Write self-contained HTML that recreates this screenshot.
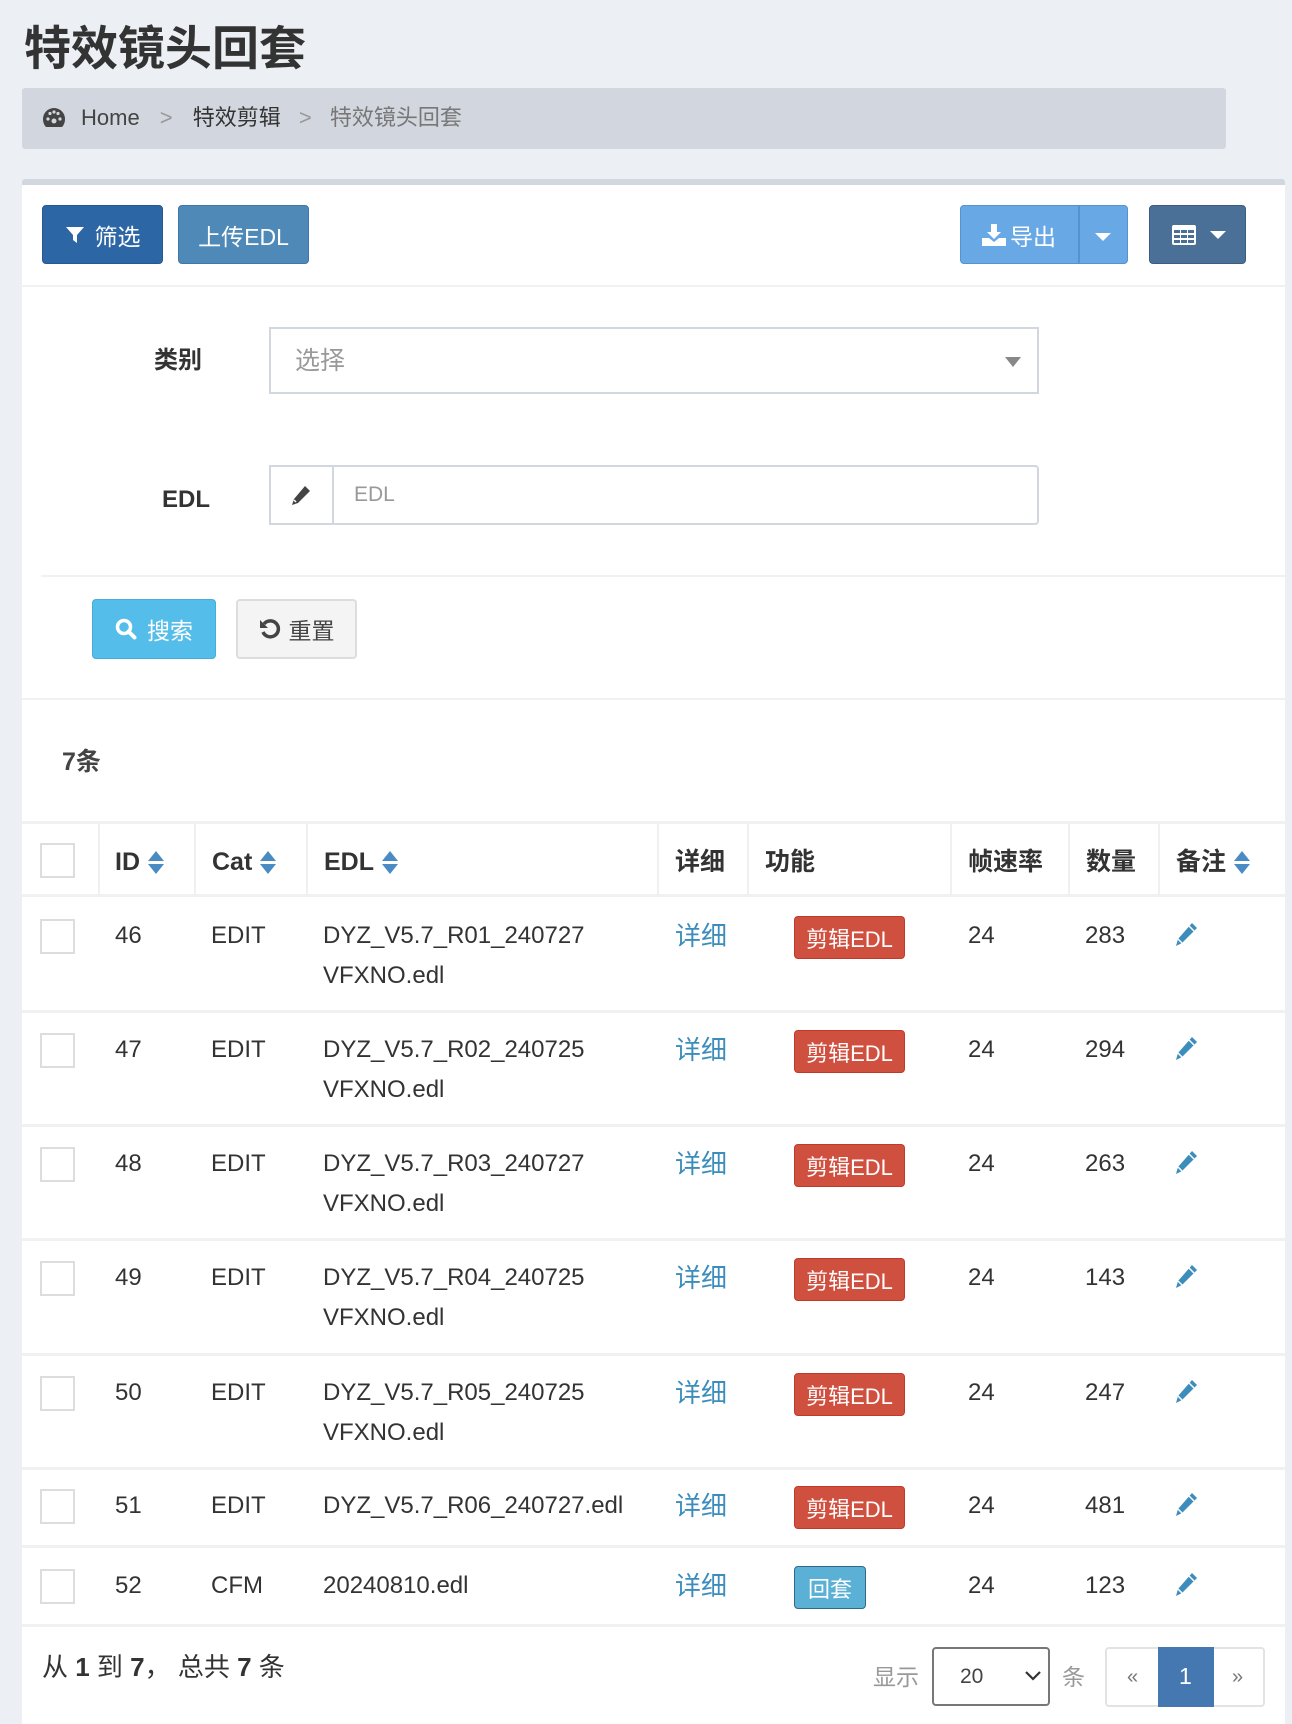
<!DOCTYPE html>
<html><head><meta charset="utf-8">
<style>
*{box-sizing:border-box;margin:0;padding:0}
body{width:1292px;height:1724px;background:#ecf0f5;font-family:"Liberation Sans","Noto Sans CJK SC",sans-serif;color:#333;position:relative;overflow:hidden}
.a{position:absolute}
.btn{position:absolute;border-radius:4px;color:#fff;font-size:23px;display:flex;align-items:center;justify-content:center}
.t{position:absolute;font-size:24px;color:#333;line-height:40px;white-space:nowrap}
.hd{position:absolute;font-size:25px;font-weight:bold;color:#333;top:842px;line-height:40px;white-space:nowrap}
.vl{position:absolute;top:821px;height:75px;width:2px;background:#f0f0f0}
.cb{position:absolute;left:40px;width:35px;height:35px;border:2px solid #ddd;background:#fff}
.hl{position:absolute;left:22px;width:1263px;height:3px;background:#f1f1f1}
.badge{position:absolute;left:794px;width:111px;height:43px;background:#d05040;border:1px solid #c1392b;border-radius:4px;color:#fff;font-size:22px;display:flex;align-items:center;justify-content:center}
.lnk{color:#3c8dbc;font-size:26px}
.sort{display:inline-block;vertical-align:middle;margin-left:8px;width:14px;height:24px;position:relative}
.sort:before{content:"";position:absolute;left:0;top:0;border-left:8px solid transparent;border-right:8px solid transparent;border-bottom:10px solid #4a8bc3}
.sort:after{content:"";position:absolute;left:0;top:13px;border-left:8px solid transparent;border-right:8px solid transparent;border-top:10px solid #4a8bc3}
</style></head><body>
<div class="a" style="left:24px;top:21px;font-size:47px;font-weight:bold;color:#333;line-height:56px">特效镜头回套</div>
<div class="a" style="left:22px;top:88px;width:1204px;height:61px;background:#d2d6de;border-radius:3px"></div>
<svg class="a" style="left:42px;top:107px" width="24" height="22" viewBox="0 0 24 22"><path d="M12 1A11 11 0 0 0 1 12c0 3 1 6 3 8h16c2-2 3-5 3-8A11 11 0 0 0 12 1z" fill="#444"/><circle cx="12" cy="14" r="2.5" fill="#d2d6de"/><circle cx="6" cy="12" r="1.6" fill="#d2d6de"/><circle cx="18" cy="12" r="1.6" fill="#d2d6de"/><circle cx="8" cy="6.5" r="1.6" fill="#d2d6de"/><circle cx="16" cy="6.5" r="1.6" fill="#d2d6de"/><circle cx="12" cy="5" r="1.6" fill="#d2d6de"/></svg>
<div class="a" style="left:81px;top:103px;font-size:22px;line-height:30px;color:#444;white-space:nowrap">Home <span style="color:#999;margin:0 14px">&gt;</span> <span style="color:#333">特效剪辑</span> <span style="color:#999;margin:0 12px">&gt;</span> <span style="color:#777">特效镜头回套</span></div>

<div class="a" style="left:22px;top:179px;width:1263px;height:1545px;background:#fff;border-top:6px solid #d2d6de;border-radius:3px 3px 0 0"></div>

<div class="btn" style="left:42px;top:205px;width:121px;height:59px;background:#2c66a4;border:1px solid #25598f"><svg width="20" height="20" viewBox="0 0 20 20" style="margin-right:10px"><path d="M1 2h18l-7 8v8l-4-3v-5z" fill="#fff"/></svg>筛选</div>
<div class="btn" style="left:178px;top:205px;width:131px;height:59px;background:#4f89b8;border:1px solid #3f78a8">上传EDL</div>
<div class="btn" style="left:960px;top:205px;width:168px;height:59px;background:#68a9e5;border:1px solid #5592cf;justify-content:flex-start;padding-left:21px"><svg width="24" height="22" viewBox="0 0 24 22" style="margin-right:4px"><path d="M9 0h6v8h4l-7 7-7-7h4z" fill="#fff"/><path d="M0 14h7l5 4 5-4h7v8H0z" fill="#fff"/></svg>导出</div>
<div class="a" style="left:1078px;top:206px;width:2px;height:57px;background:#5592cf"></div>
<div class="a" style="left:1095px;top:233px;border-left:8px solid transparent;border-right:8px solid transparent;border-top:8px solid #fff"></div>
<div class="btn" style="left:1149px;top:205px;width:97px;height:59px;background:#4a7097;border:1px solid #3c5d80;justify-content:flex-start;padding-left:22px"><svg width="24" height="20" viewBox="0 0 24 20"><rect x="0" y="0" width="24" height="20" rx="2" fill="#fff"/><g fill="#4a7097"><rect x="2" y="5" width="6" height="3"/><rect x="9" y="5" width="6" height="3"/><rect x="16" y="5" width="6" height="3"/><rect x="2" y="10" width="6" height="3"/><rect x="9" y="10" width="6" height="3"/><rect x="16" y="10" width="6" height="3"/><rect x="2" y="15" width="6" height="3"/><rect x="9" y="15" width="6" height="3"/><rect x="16" y="15" width="6" height="3"/></g></svg><span style="margin-left:14px;border-left:8px solid transparent;border-right:8px solid transparent;border-top:8px solid #fff"></span></div>
<div class="hl" style="top:285px;height:2px"></div>

<div class="a" style="left:154px;top:343px;font-size:24px;font-weight:bold;line-height:36px">类别</div>
<div class="a" style="left:269px;top:327px;width:770px;height:67px;border:2px solid #d2d6de"></div>
<div class="a" style="left:295px;top:343px;font-size:25px;color:#999;line-height:36px">选择</div>
<div class="a" style="left:1005px;top:357px;border-left:8px solid transparent;border-right:8px solid transparent;border-top:10px solid #888"></div>

<div class="a" style="left:162px;top:482px;font-size:24px;font-weight:bold;line-height:36px">EDL</div>
<div class="a" style="left:269px;top:465px;width:770px;height:60px;border:2px solid #d2d6de;border-radius:0 4px 4px 0"></div>
<div class="a" style="left:332px;top:467px;width:2px;height:56px;background:#d2d6de"></div>
<svg class="a" style="left:290px;top:484px" width="22" height="22" viewBox="0 0 22 22"><path d="M15 2l5 5-12 12-6 2 2-6z" fill="#444"/><path d="M4 16l2 2" stroke="#fff" stroke-width="1.5"/></svg>
<div class="a" style="left:354px;top:479px;font-size:21px;color:#999;line-height:32px">EDL</div>
<div class="a" style="left:41px;top:575px;width:1244px;height:2px;background:#f1f1f1"></div>

<div class="btn" style="left:92px;top:599px;width:124px;height:60px;background:#54bde9;border:1px solid #46acd8"><svg width="22" height="22" viewBox="0 0 22 22" style="margin-right:10px"><circle cx="9" cy="9" r="6.5" stroke="#fff" stroke-width="3.5" fill="none"/><path d="M13.5 13.5l6 6" stroke="#fff" stroke-width="4" stroke-linecap="round"/></svg>搜索</div>
<div class="btn" style="left:236px;top:599px;width:121px;height:60px;background:#f4f4f4;border:2px solid #ddd;color:#444"><svg width="22" height="22" viewBox="0 0 22 22" style="margin-right:8px"><path d="M5 6A8 8 0 1 1 4 14" stroke="#444" stroke-width="3.5" fill="none"/><path d="M1 2v8h8z" fill="#444"/></svg>重置</div>
<div class="hl" style="top:698px;height:2px"></div>

<div class="a" style="left:62px;top:744px;font-size:25px;font-weight:bold;line-height:36px;color:#444">7条</div>

<div class="hl" style="top:821px;height:3px"></div>
<div class="hl" style="top:894px;height:3px"></div>
<div class="vl" style="left:98px"></div><div class="vl" style="left:194px"></div><div class="vl" style="left:306px"></div><div class="vl" style="left:657px"></div><div class="vl" style="left:747px"></div><div class="vl" style="left:950px"></div><div class="vl" style="left:1068px"></div><div class="vl" style="left:1158px"></div>
<div class="cb" style="top:843px"></div>
<div class="hd" style="left:115px">ID<span class="sort"></span></div>
<div class="hd" style="left:212px">Cat<span class="sort"></span></div>
<div class="hd" style="left:324px">EDL<span class="sort"></span></div>
<div class="hd" style="left:675px">详细</div>
<div class="hd" style="left:765px">功能</div>
<div class="hd" style="left:968px">帧速率</div>
<div class="hd" style="left:1086px">数量</div>
<div class="hd" style="left:1176px">备注<span class="sort"></span></div>

<div class="cb" style="top:919px"></div><div class="t" style="left:115px;top:916px">46</div><div class="t" style="left:211px;top:916px">EDIT</div><div class="t" style="left:323px;top:916px">DYZ_V5.7_R01_240727<br>VFXNO.edl</div><div class="t lnk" style="left:675px;top:916px">详细</div><div class="badge" style="top:916px">剪辑EDL</div><div class="t" style="left:968px;top:916px">24</div><div class="t" style="left:1085px;top:916px">283</div>
<div class="hl" style="top:1010px"></div>
<div class="cb" style="top:1033px"></div><div class="t" style="left:115px;top:1030px">47</div><div class="t" style="left:211px;top:1030px">EDIT</div><div class="t" style="left:323px;top:1030px">DYZ_V5.7_R02_240725<br>VFXNO.edl</div><div class="t lnk" style="left:675px;top:1030px">详细</div><div class="badge" style="top:1030px">剪辑EDL</div><div class="t" style="left:968px;top:1030px">24</div><div class="t" style="left:1085px;top:1030px">294</div>
<div class="hl" style="top:1124px"></div>
<div class="cb" style="top:1147px"></div><div class="t" style="left:115px;top:1144px">48</div><div class="t" style="left:211px;top:1144px">EDIT</div><div class="t" style="left:323px;top:1144px">DYZ_V5.7_R03_240727<br>VFXNO.edl</div><div class="t lnk" style="left:675px;top:1144px">详细</div><div class="badge" style="top:1144px">剪辑EDL</div><div class="t" style="left:968px;top:1144px">24</div><div class="t" style="left:1085px;top:1144px">263</div>
<div class="hl" style="top:1238px"></div>
<div class="cb" style="top:1261px"></div><div class="t" style="left:115px;top:1258px">49</div><div class="t" style="left:211px;top:1258px">EDIT</div><div class="t" style="left:323px;top:1258px">DYZ_V5.7_R04_240725<br>VFXNO.edl</div><div class="t lnk" style="left:675px;top:1258px">详细</div><div class="badge" style="top:1258px">剪辑EDL</div><div class="t" style="left:968px;top:1258px">24</div><div class="t" style="left:1085px;top:1258px">143</div>
<div class="hl" style="top:1353px"></div>
<div class="cb" style="top:1376px"></div><div class="t" style="left:115px;top:1373px">50</div><div class="t" style="left:211px;top:1373px">EDIT</div><div class="t" style="left:323px;top:1373px">DYZ_V5.7_R05_240725<br>VFXNO.edl</div><div class="t lnk" style="left:675px;top:1373px">详细</div><div class="badge" style="top:1373px">剪辑EDL</div><div class="t" style="left:968px;top:1373px">24</div><div class="t" style="left:1085px;top:1373px">247</div>
<div class="hl" style="top:1467px"></div>
<div class="cb" style="top:1489px"></div><div class="t" style="left:115px;top:1486px">51</div><div class="t" style="left:211px;top:1486px">EDIT</div><div class="t" style="left:323px;top:1486px">DYZ_V5.7_R06_240727.edl</div><div class="t lnk" style="left:675px;top:1486px">详细</div><div class="badge" style="top:1486px">剪辑EDL</div><div class="t" style="left:968px;top:1486px">24</div><div class="t" style="left:1085px;top:1486px">481</div>
<div class="hl" style="top:1545px"></div>
<div class="cb" style="top:1569px"></div><div class="t" style="left:115px;top:1566px">52</div><div class="t" style="left:211px;top:1566px">CFM</div><div class="t" style="left:323px;top:1566px">20240810.edl</div><div class="t lnk" style="left:675px;top:1566px">详细</div><div class="badge" style="top:1566px;width:72px;background:#5bb0d6;border-color:#2e6b8a">回套</div><div class="t" style="left:968px;top:1566px">24</div><div class="t" style="left:1085px;top:1566px">123</div>
<div class="hl" style="top:1624px"></div>

<svg class="a" style="left:1174px;top:922px" width="24" height="26" viewBox="0 0 24 26"><path d="M18 1l5 5L8 21l-6 3 2-7z" fill="#3c8dbc"/><path d="M4 17l4 4" stroke="#fff" stroke-width="1.5"/><path d="M15 4l5 5" stroke="#fff" stroke-width="1.5"/></svg>
<svg class="a" style="left:1174px;top:1036px" width="24" height="26" viewBox="0 0 24 26"><path d="M18 1l5 5L8 21l-6 3 2-7z" fill="#3c8dbc"/><path d="M4 17l4 4" stroke="#fff" stroke-width="1.5"/><path d="M15 4l5 5" stroke="#fff" stroke-width="1.5"/></svg>
<svg class="a" style="left:1174px;top:1150px" width="24" height="26" viewBox="0 0 24 26"><path d="M18 1l5 5L8 21l-6 3 2-7z" fill="#3c8dbc"/><path d="M4 17l4 4" stroke="#fff" stroke-width="1.5"/><path d="M15 4l5 5" stroke="#fff" stroke-width="1.5"/></svg>
<svg class="a" style="left:1174px;top:1264px" width="24" height="26" viewBox="0 0 24 26"><path d="M18 1l5 5L8 21l-6 3 2-7z" fill="#3c8dbc"/><path d="M4 17l4 4" stroke="#fff" stroke-width="1.5"/><path d="M15 4l5 5" stroke="#fff" stroke-width="1.5"/></svg>
<svg class="a" style="left:1174px;top:1379px" width="24" height="26" viewBox="0 0 24 26"><path d="M18 1l5 5L8 21l-6 3 2-7z" fill="#3c8dbc"/><path d="M4 17l4 4" stroke="#fff" stroke-width="1.5"/><path d="M15 4l5 5" stroke="#fff" stroke-width="1.5"/></svg>
<svg class="a" style="left:1174px;top:1492px" width="24" height="26" viewBox="0 0 24 26"><path d="M18 1l5 5L8 21l-6 3 2-7z" fill="#3c8dbc"/><path d="M4 17l4 4" stroke="#fff" stroke-width="1.5"/><path d="M15 4l5 5" stroke="#fff" stroke-width="1.5"/></svg>
<svg class="a" style="left:1174px;top:1572px" width="24" height="26" viewBox="0 0 24 26"><path d="M18 1l5 5L8 21l-6 3 2-7z" fill="#3c8dbc"/><path d="M4 17l4 4" stroke="#fff" stroke-width="1.5"/><path d="M15 4l5 5" stroke="#fff" stroke-width="1.5"/></svg>

<div class="a" style="left:42px;top:1649px;font-size:26px;line-height:36px;color:#333">从 <b>1</b> 到 <b>7</b>， 总共 <b>7</b> 条</div>
<div class="a" style="left:873px;top:1660px;font-size:23px;color:#999;line-height:34px">显示</div>
<div class="a" style="left:932px;top:1647px;width:118px;height:59px;border:2px solid #777;border-radius:4px"></div>
<div class="a" style="left:960px;top:1660px;font-size:21px;color:#444;line-height:34px">20</div>
<svg class="a" style="left:1024px;top:1670px" width="18" height="12" viewBox="0 0 18 12"><path d="M2 2l7 7 7-7" stroke="#333" stroke-width="2.2" fill="none"/></svg>
<div class="a" style="left:1062px;top:1660px;font-size:23px;color:#999;line-height:34px">条</div>
<div class="a" style="left:1105px;top:1647px;width:160px;height:60px;border:2px solid #e3e3e3;border-radius:4px"></div>
<div class="a" style="left:1158px;top:1647px;width:56px;height:60px;background:#4578b1"></div>
<div class="a" style="left:1127px;top:1660px;font-size:20px;color:#777;line-height:34px">«</div>
<div class="a" style="left:1179px;top:1659px;font-size:23px;color:#fff;line-height:34px">1</div>
<div class="a" style="left:1232px;top:1660px;font-size:20px;color:#777;line-height:34px">»</div>
</body></html>
